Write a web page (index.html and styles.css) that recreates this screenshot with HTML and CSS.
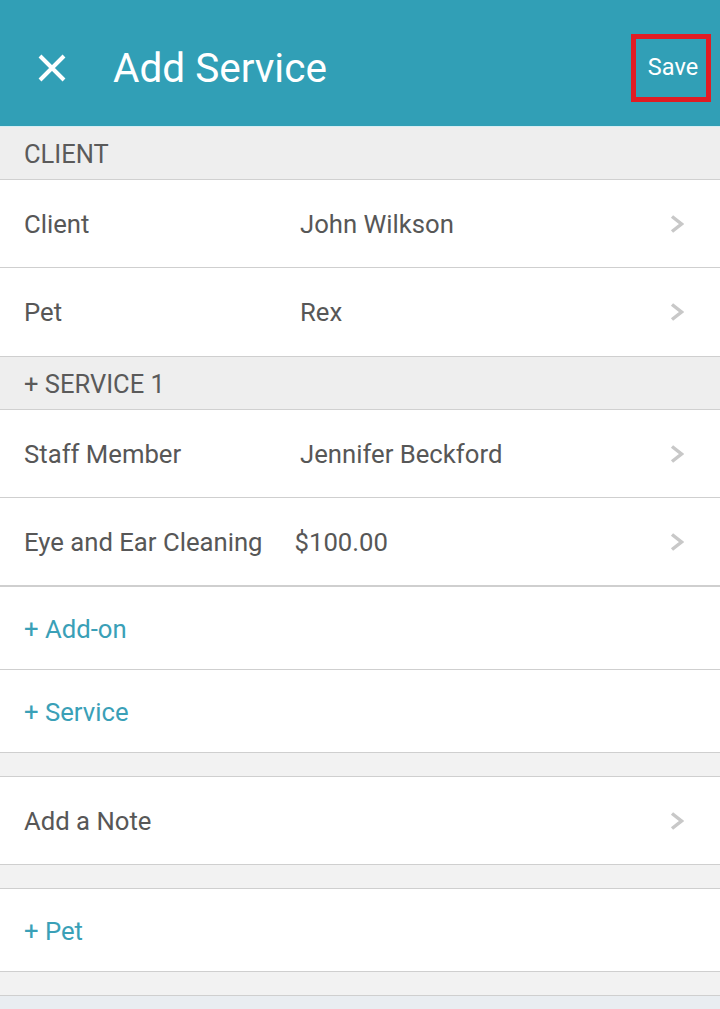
FILE: index.html
```html
<!DOCTYPE html>
<html lang="en">
<head>
  <meta charset="UTF-8">
  <meta name="viewport" content="width=device-width, initial-scale=1.0">
  <title>Add Service</title>
  <link rel="stylesheet" href="styles.css">
</head>
<body>
  <header class="topbar">
    <button class="close" aria-label="Close">
      <svg width="30" height="30" viewBox="0 0 30 30"><path d="M3 3 L27 27 M27 3 L3 27" stroke="#fff" stroke-width="4"/></svg>
    </button>
    <h1 class="title">Add Service</h1>
    <button class="save">Save</button>
  </header>

  <div class="section">CLIENT</div>
  <div class="row">
    <span class="label">Client</span>
    <span class="value">John Wilkson</span>
    <svg class="chev" width="14" height="18" viewBox="0 0 14 18"><polyline points="2,1.5 11.5,9 2,16.5" fill="none" stroke="#c8c8c8" stroke-width="3.5"/></svg>
  </div>
  <div class="row row-tall">
    <span class="label">Pet</span>
    <span class="value">Rex</span>
    <svg class="chev" width="14" height="18" viewBox="0 0 14 18"><polyline points="2,1.5 11.5,9 2,16.5" fill="none" stroke="#c8c8c8" stroke-width="3.5"/></svg>
  </div>

  <div class="section">+ SERVICE 1</div>
  <div class="row">
    <span class="label">Staff Member</span>
    <span class="value">Jennifer Beckford</span>
    <svg class="chev" width="14" height="18" viewBox="0 0 14 18"><polyline points="2,1.5 11.5,9 2,16.5" fill="none" stroke="#c8c8c8" stroke-width="3.5"/></svg>
  </div>
  <div class="row row-price">
    <span class="label">Eye and Ear Cleaning</span>
    <span class="value">$100.00</span>
    <svg class="chev" width="14" height="18" viewBox="0 0 14 18"><polyline points="2,1.5 11.5,9 2,16.5" fill="none" stroke="#c8c8c8" stroke-width="3.5"/></svg>
  </div>
  <div class="link-row">+ Add-on</div>
  <div class="link-row">+ Service</div>

  <div class="spacer"></div>
  <div class="row">
    <span class="label">Add a Note</span>
    <span class="value"></span>
    <svg class="chev" width="14" height="18" viewBox="0 0 14 18"><polyline points="2,1.5 11.5,9 2,16.5" fill="none" stroke="#c8c8c8" stroke-width="3.5"/></svg>
  </div>

  <div class="spacer"></div>
  <div class="link-row">+ Pet</div>
  <div class="spacer"></div>
</body>
</html>
```

FILE: styles.css
```css
body {
  margin: 0;
  font-family: Roboto, "Noto Sans", sans-serif;
  background-color: #e9edf1;
  color: #575757;
}

.topbar {
  box-sizing: border-box;
  height: 127px;
  background-color: #319fb6;
  display: flex;
  align-items: center;
  padding: 10px 9px 0 37px;
  border-bottom: 1px solid #d6eef3;
}

.close {
  background: none;
  border: none;
  padding: 0;
  width: 30px;
  height: 30px;
}

.title {
  flex: 1;
  margin: 0 0 0 46px;
  color: #fff;
  font-weight: 400;
  font-size: 40.5px;
}

.save {
  background: none;
  border: 5px solid #e01c23;
  color: #fff;
  font-family: inherit;
  font-size: 23.5px;
  width: 80px;
  height: 68px;
  padding: 0 0 2px 4px;
}

.section {
  height: 52px;
  background-color: #eeeeee;
  border-bottom: 1px solid #d0d0d0;
  padding-left: 24px;
  font-size: 25.5px;
  line-height: 54px;
  color: #5a5a5a;
}

.row {
  height: 87px;
  background-color: #fff;
  border-bottom: 1px solid #cfcfcf;
  display: flex;
  align-items: center;
  padding: 0 36px 0 24px;
  font-size: 25.7px;
}

.row-tall {
  height: 88px;
}

.row .label {
  width: 276px;
}

.row-price .label {
  width: auto;
  margin-right: 32px;
}

.row .value {
  flex: 1;
}

.row-price {
  border-bottom-width: 2px;
}

.link-row {
  height: 82px;
  background-color: #fff;
  border-bottom: 1px solid #cfcfcf;
  padding-left: 24px;
  font-size: 25.7px;
  line-height: 84px;
  color: #3aa0b7;
}

.spacer {
  height: 23px;
  background-color: #f2f2f2;
  border-bottom: 1px solid #cfcfcf;
}
```
